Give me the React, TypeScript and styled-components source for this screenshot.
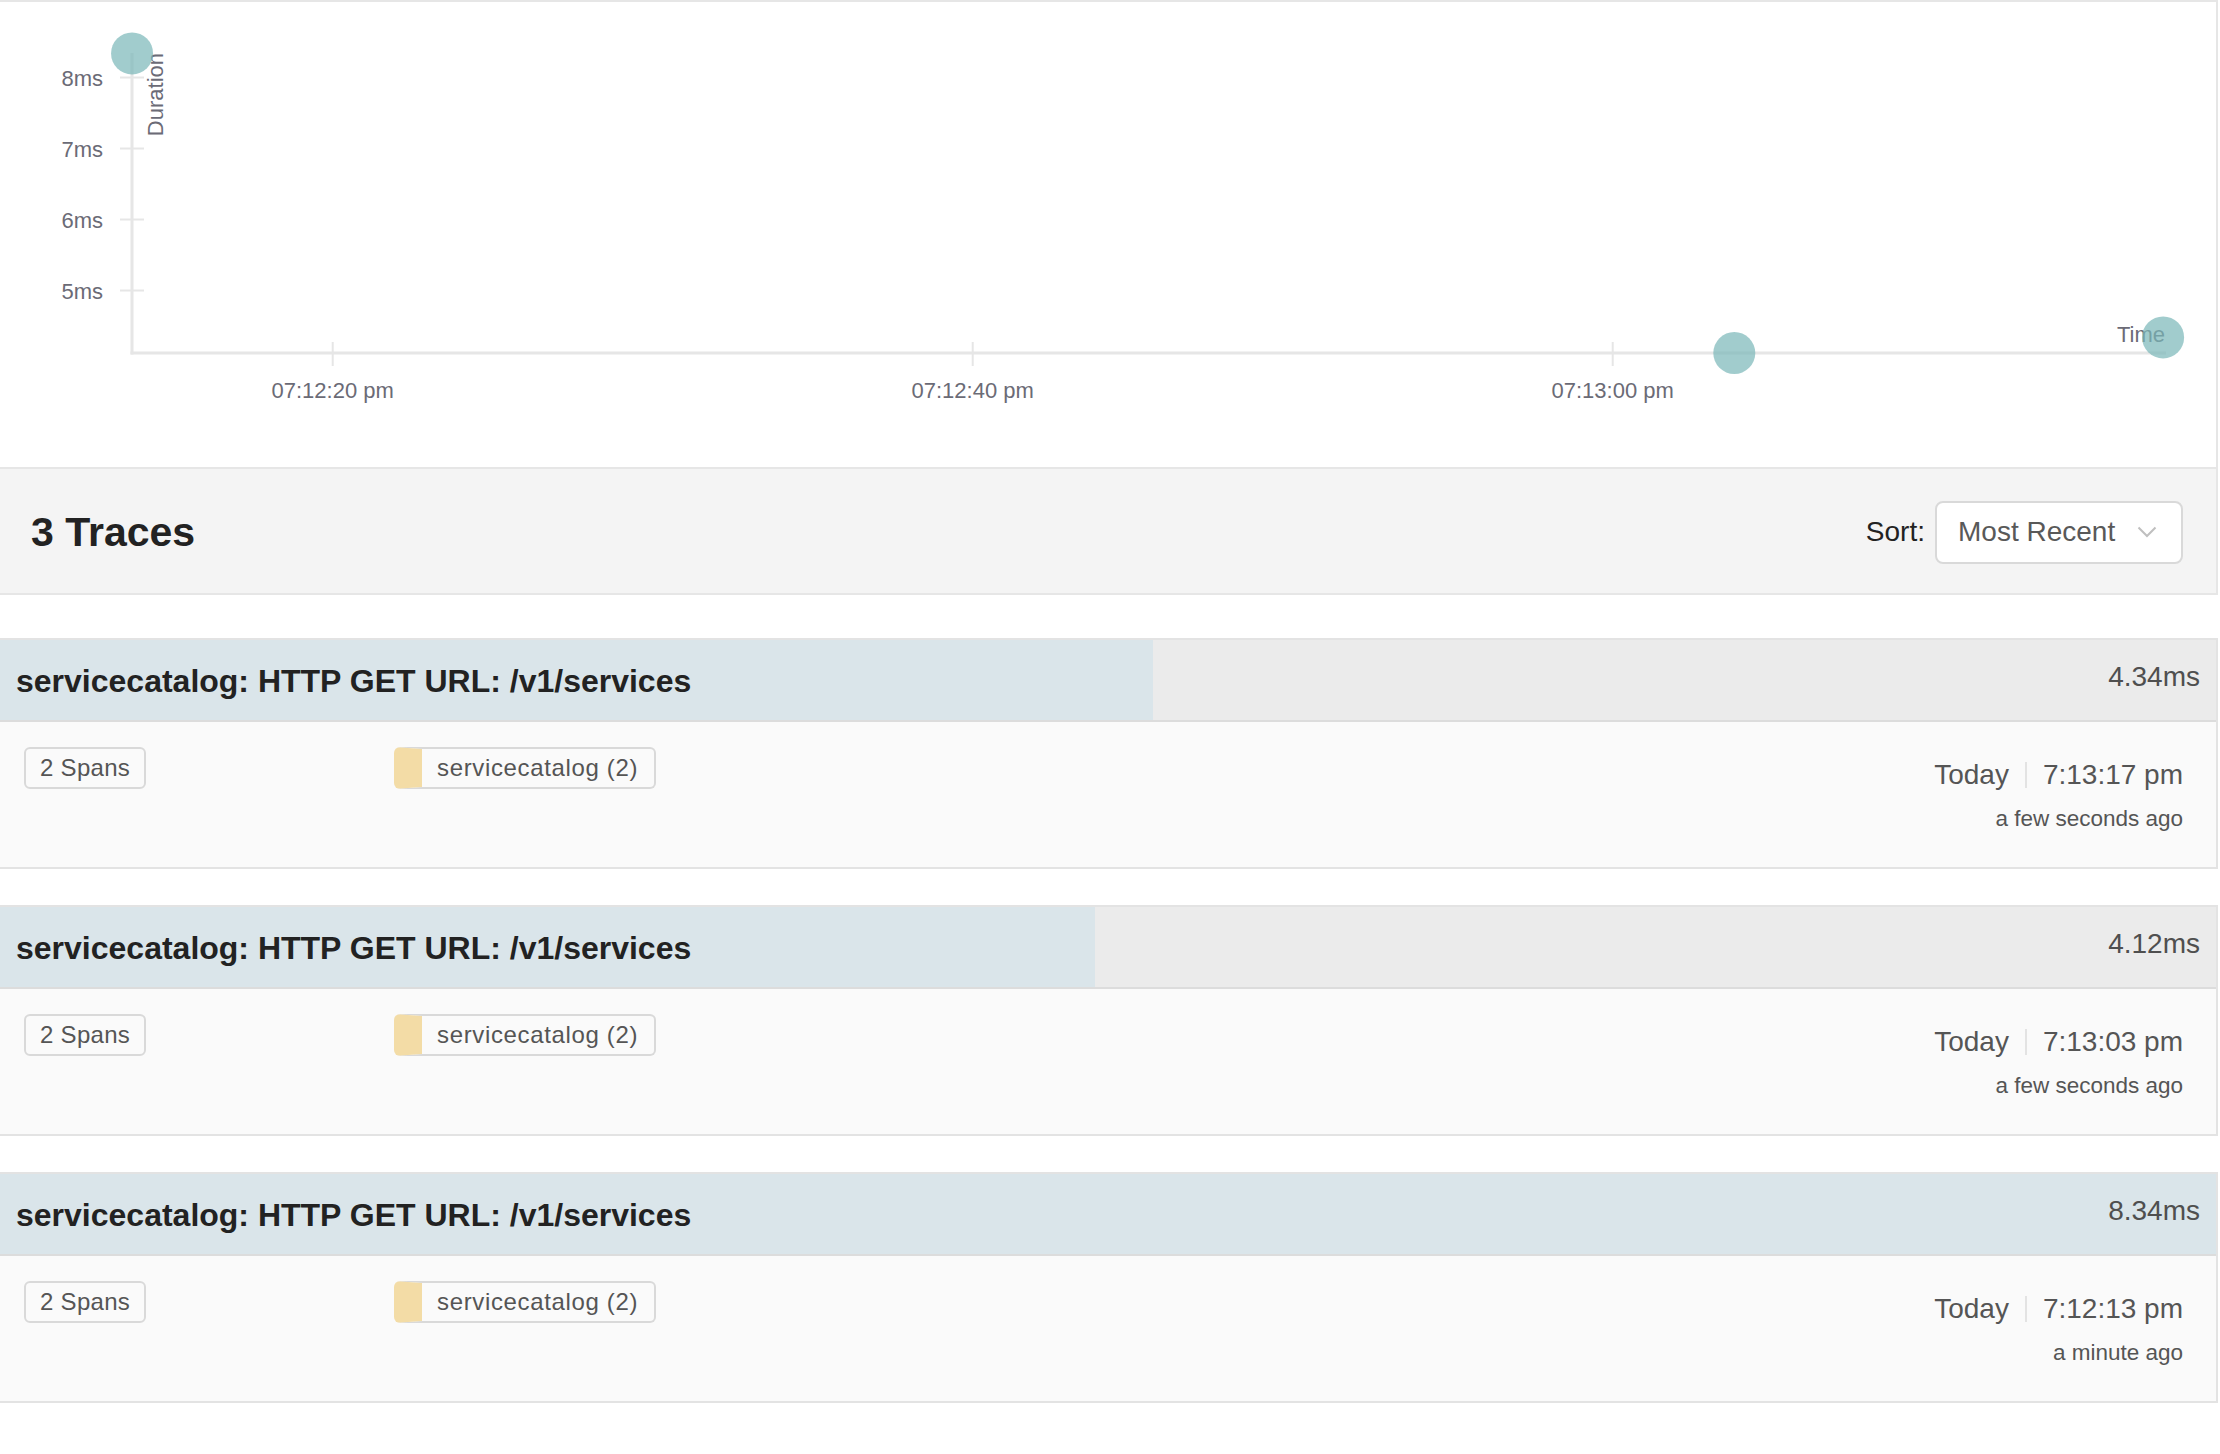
import React from "react";
import styled, { createGlobalStyle } from "styled-components";

const GlobalStyle = createGlobalStyle`
  html, body { margin: 0; padding: 0; background: #ffffff; }
  body { font-family: "Liberation Sans", Arial, Helvetica, sans-serif; }
  * { box-sizing: border-box; }
`;

const Page = styled.div`
  width: calc(100% - 2px);
  display: flex;
  flex-direction: column;
`;

const ChartPanel = styled.section`
  height: 467px;
  border-top: 2px solid #e6e6e6;
  border-right: 2px solid #e6e6e6;
  background: #ffffff;
  svg { display: block; }
`;

const AxisText = styled.text`
  font-family: "Liberation Sans", Arial, sans-serif;
  font-size: 22px;
  fill: #6b6b76;
`;

const ResultsHeader = styled.header`
  height: 128px;
  background: #f4f4f4;
  border-top: 2px solid #e6e6e6;
  border-bottom: 2px solid #e6e6e6;
  border-right: 2px solid #e6e6e6;
  display: flex;
  align-items: center;
  justify-content: space-between;
  padding: 0 33px 0 31px;
`;

const ResultsTitle = styled.h2`
  margin: 2px 0 0 0;
  font-size: 41px;
  font-weight: 700;
  color: #222222;
`;

const SortGroup = styled.div`
  display: flex;
  align-items: center;
  gap: 10px;
  margin-top: 2px;
`;

const SortLabel = styled.span`
  font-size: 28px;
  color: #222222;
`;

const SortSelect = styled.div`
  width: 248px;
  height: 63px;
  border: 2px solid #d9d9d9;
  border-radius: 8px;
  background: #ffffff;
  display: flex;
  align-items: center;
  justify-content: space-between;
  padding: 0 24px 0 21px;
  font-size: 28px;
  color: #595959;
`;

const TraceList = styled.div`
  display: flex;
  flex-direction: column;
  gap: 36px;
  padding-top: 43px;
`;

const TraceCard = styled.article`
  border-top: 2px solid #e3e3e3;
  border-bottom: 2px solid #e3e3e3;
  border-right: 2px solid #e3e3e3;
`;

const CardHeader = styled.div<{ $pct: number }>`
  height: 82px;
  border-bottom: 2px solid #dcdcdc;
  background: linear-gradient(
    to right,
    #dae5ea ${(p) => p.$pct}%,
    #ebebeb ${(p) => p.$pct}%
  );
  display: flex;
  align-items: center;
  justify-content: space-between;
  padding: 0 16px;
`;

const TraceTitle = styled.h3`
  margin: 2px 0 0 0;
  font-size: 32px;
  font-weight: 700;
  color: #222222;
`;

const Duration = styled.span`
  font-size: 28px;
  color: #4f4f4f;
  margin-top: -6px;
`;

const CardBody = styled.div`
  height: 145px;
  background: #fafafa;
  display: grid;
  grid-template-columns: 370px 1fr auto;
  align-items: start;
  padding: 25px 33px 0 24px;
`;

const Tag = styled.span<{ $swatch?: string }>`
  display: inline-flex;
  align-items: center;
  height: 42px;
  border: 2px solid #d9d9d9;
  border-left: ${(p) => (p.$swatch ? `28px solid ${p.$swatch}` : "2px solid #d9d9d9")};
  border-radius: 6px;
  padding: ${(p) => (p.$swatch ? "0 16px 0 15px" : "0 14px")};
  font-size: 24px;
  letter-spacing: ${(p) => (p.$swatch ? "0.65px" : "0.3px")};
  color: #555555;
  background: #fafafa;
  justify-self: start;
`;

const TimeCol = styled.div`
  display: flex;
  flex-direction: column;
  align-items: flex-end;
  padding-top: 10px;
  color: #555555;
`;

const TimeRow = styled.div`
  display: flex;
  align-items: center;
  font-size: 28px;
  line-height: 36px;
`;

const Divider = styled.span`
  width: 2px;
  height: 26px;
  background: #e3e3e3;
  margin: 0 16px;
`;

const Ago = styled.div`
  margin-top: 11px;
  font-size: 22.5px;
  line-height: 30px;
`;

type Trace = {
  duration: number;
  date: string;
  time: string;
  ago: string;
};

const traces: Trace[] = [
  { duration: 4.34, date: "Today", time: "7:13:17 pm", ago: "a few seconds ago" },
  { duration: 4.12, date: "Today", time: "7:13:03 pm", ago: "a few seconds ago" },
  { duration: 8.34, date: "Today", time: "7:12:13 pm", ago: "a minute ago" },
];

const maxDuration = 8.34;

const yOf = (ms: number) => 353 - (ms - 4.12) * 71;
const xOf = (sec: number) => 332.7 + (sec - 20) * 32;

const points = [
  { x: xOf(13.73), y: yOf(8.34) },
  { x: xOf(63.8), y: yOf(4.12) },
  { x: xOf(77.2), y: yOf(4.34) },
];

const xTicks = [
  { x: xOf(20), label: "07:12:20 pm" },
  { x: xOf(40), label: "07:12:40 pm" },
  { x: xOf(60), label: "07:13:00 pm" },
];

const yTicks = [8, 7, 6, 5];

function Chart() {
  return (
    <ChartPanel>
      <svg width="100%" height="465">
        <g transform="translate(0,-2)">
          <line x1={132} y1={53} x2={132} y2={354.5} stroke="#e6e6e6" strokeWidth={3} />
          <line x1={130.5} y1={353} x2={2166} y2={353} stroke="#e6e6e6" strokeWidth={3} />
          {yTicks.map((v) => (
            <g key={v}>
              <line x1={120} y1={yOf(v)} x2={144} y2={yOf(v)} stroke="#e6e6e6" strokeWidth={2} />
              <AxisText x={103} y={yOf(v) + 8} textAnchor="end">
                {v}ms
              </AxisText>
            </g>
          ))}
          {xTicks.map((t) => (
            <g key={t.label}>
              <line x1={t.x} y1={342} x2={t.x} y2={366} stroke="#e6e6e6" strokeWidth={2} />
              <AxisText x={t.x} y={398} textAnchor="middle">
                {t.label}
              </AxisText>
            </g>
          ))}
          <AxisText x={163} y={53} textAnchor="end" transform="rotate(-90 163 53)">
            Duration
          </AxisText>
          <AxisText x={2165} y={342} textAnchor="end">
            Time
          </AxisText>
          {points.map((p, i) => (
            <circle key={i} cx={p.x} cy={p.y} r={21} fill="#79b6b8" fillOpacity={0.7} />
          ))}
        </g>
      </svg>
    </ChartPanel>
  );
}

function Chevron() {
  return (
    <svg width="20" height="12" viewBox="0 0 20 12" aria-hidden>
      <path d="M1.5 1.5 L10 10 L18.5 1.5" fill="none" stroke="#bfbfbf" strokeWidth="2" />
    </svg>
  );
}

export default function App() {
  return (
    <>
      <GlobalStyle />
      <Page>
        <Chart />
        <ResultsHeader>
          <ResultsTitle>3 Traces</ResultsTitle>
          <SortGroup>
            <SortLabel>Sort:</SortLabel>
            <SortSelect>
              <span>Most Recent</span>
              <Chevron />
            </SortSelect>
          </SortGroup>
        </ResultsHeader>
        <TraceList>
          {traces.map((t, i) => (
            <TraceCard key={i}>
              <CardHeader $pct={(t.duration / maxDuration) * 100}>
                <TraceTitle>servicecatalog: HTTP GET URL: /v1/services</TraceTitle>
                <Duration>{t.duration.toFixed(2)}ms</Duration>
              </CardHeader>
              <CardBody>
                <Tag>2 Spans</Tag>
                <Tag $swatch="#f3dca6">servicecatalog (2)</Tag>
                <TimeCol>
                  <TimeRow>
                    <span>{t.date}</span>
                    <Divider />
                    <span>{t.time}</span>
                  </TimeRow>
                  <Ago>{t.ago}</Ago>
                </TimeCol>
              </CardBody>
            </TraceCard>
          ))}
        </TraceList>
      </Page>
    </>
  );
}
